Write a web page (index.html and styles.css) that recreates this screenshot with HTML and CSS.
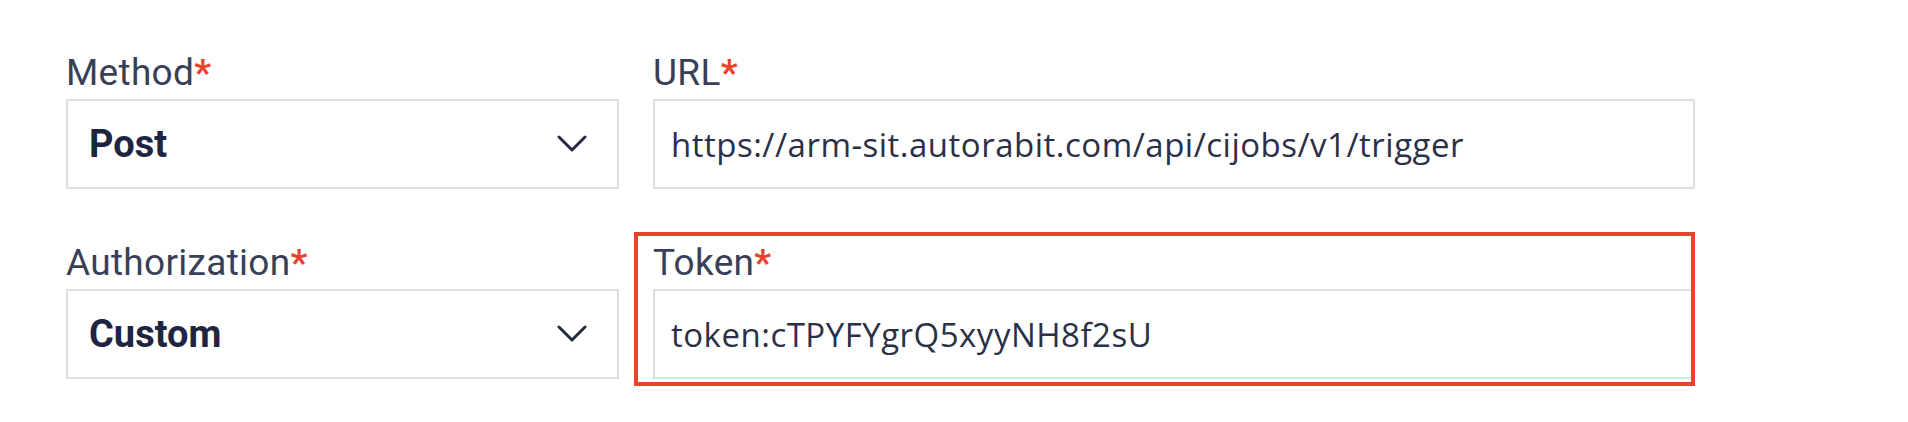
FILE: index.html
```html
<!DOCTYPE html>
<html lang="en">
<head>
<meta charset="utf-8">
<title>Webhook form</title>
<link rel="stylesheet" href="styles.css">
</head>
<body>
<form class="form">
  <div class="field">
    <label class="label">Method<span class="req">*</span></label>
    <div class="select">
      <span class="select-value">Post</span>
      <svg class="chevron" width="30" height="18" viewBox="0 0 30 18"><polyline points="2,2 15,15 28,2" fill="none" stroke="#262b44" stroke-width="3" stroke-linecap="round" stroke-linejoin="round"/></svg>
    </div>
  </div>
  <div class="field">
    <label class="label">URL<span class="req">*</span></label>
    <div class="input">https://arm-sit.autorabit.com/api/cijobs/v1/trigger</div>
  </div>
  <div class="field">
    <label class="label">Authorization<span class="req">*</span></label>
    <div class="select">
      <span class="select-value">Custom</span>
      <svg class="chevron" width="30" height="18" viewBox="0 0 30 18"><polyline points="2,2 15,15 28,2" fill="none" stroke="#262b44" stroke-width="3" stroke-linecap="round" stroke-linejoin="round"/></svg>
    </div>
  </div>
  <div class="field field-highlighted">
    <label class="label">Token<span class="req">*</span></label>
    <div class="input">token:cTPYFYgrQ5xyyNH8f2sU</div>
    <div class="highlight"></div>
  </div>
</form>
</body>
</html>
```
FILE: styles.css
```css
* { box-sizing: border-box; }

html, body {
  margin: 0;
  background: #ffffff;
}

body {
  width: 1908px;
  height: 422px;
  overflow: hidden;
}

.form {
  display: grid;
  grid-template-columns: 553px 1042px;
  column-gap: 34px;
  row-gap: 52px;
  padding: 51px 0 0 66px;
}

.field {
  display: flex;
  flex-direction: column;
}

.field-highlighted {
  position: relative;
}

.label {
  font-family: Roboto, "Liberation Sans", sans-serif;
  font-size: 37px;
  letter-spacing: 0.3px;
  line-height: 44px;
  color: #3a3f58;
  margin-bottom: 4px;
}

.req {
  color: #e8432c;
  font-weight: 700;
}

.select {
  height: 90px;
  border: 2px solid #dfe0e6;
  display: flex;
  align-items: center;
  justify-content: space-between;
  padding: 0 30px 0 21px;
}

.select-value {
  font-family: Roboto, "Liberation Sans", sans-serif;
  font-weight: 700;
  font-size: 38px;
  color: #1f2540;
}

.chevron {
  display: block;
}

.input {
  height: 90px;
  border: 2px solid #dfe0e6;
  display: flex;
  align-items: center;
  padding: 0 0 0 16px;
  font-family: "Open Sans", "Liberation Sans", sans-serif;
  font-size: 33px;
  letter-spacing: 0.5px;
  color: #2b3047;
}

.highlight {
  position: absolute;
  left: -19px;
  top: -9px;
  right: 0;
  bottom: -7px;
  border: 4px solid #e8432c;
  pointer-events: none;
}
```
